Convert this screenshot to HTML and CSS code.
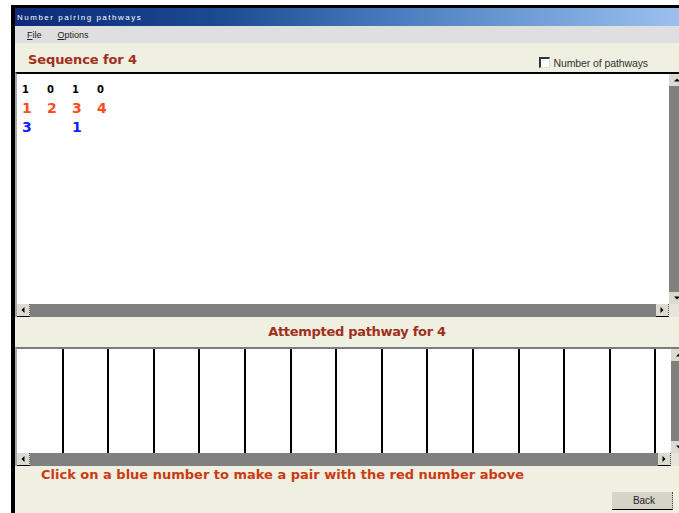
FILE: index.html
```html
<!DOCTYPE html>
<html>
<head>
<meta charset="utf-8">
<title>Pathways</title>
<link rel="stylesheet" href="styles.css">
</head>
<body>
<div class="window">
  <div class="titlebar"><span class="title">Number pairing pathways</span></div>
  <div class="menubar">
    <span class="menu"><u>F</u>ile</span>
    <span class="menu"><u>O</u>ptions</span>
  </div>
  <div class="client">
    <div class="head-row">
      <h1 class="caption">Sequence for 4</h1>
      <label class="check"><span class="check-box"></span>Number of pathways</label>
    </div>

    <div class="panel panel-seq">
      <div class="panel-body">
        <div class="view seq-view">
          <div class="num-row row-bits"><span>1</span><span>0</span><span>1</span><span>0</span></div>
          <div class="num-row row-red"><span>1</span><span>2</span><span>3</span><span>4</span></div>
          <div class="num-row row-blue"><span>3</span><span></span><span>1</span><span></span></div>
        </div>
        <div class="vscroll">
          <span class="sbtn up"></span>
          <span class="track"></span>
          <span class="sbtn down"></span>
        </div>
      </div>
      <div class="hscroll">
        <span class="sbtn left"></span>
        <span class="track"></span>
        <span class="sbtn right"></span>
        <span class="corner"></span>
      </div>
    </div>

    <h2 class="caption centered">Attempted pathway for 4</h2>

    <div class="panel panel-path">
      <div class="panel-body">
        <div class="view path-view">
          <div class="cell"></div><div class="cell"></div><div class="cell"></div><div class="cell"></div>
          <div class="cell"></div><div class="cell"></div><div class="cell"></div><div class="cell"></div>
          <div class="cell"></div><div class="cell"></div><div class="cell"></div><div class="cell"></div>
          <div class="cell"></div><div class="cell"></div>
        </div>
        <div class="vscroll">
          <span class="sbtn up"></span>
          <span class="track"></span>
          <span class="sbtn down"></span>
        </div>
      </div>
      <div class="hscroll">
        <span class="sbtn left"></span>
        <span class="track"></span>
        <span class="sbtn right"></span>
        <span class="corner"></span>
      </div>
    </div>

    <p class="hint">Click on a blue number to make a pair with the red number above</p>

    <div class="actions">
      <button class="btn" type="button">Back</button>
    </div>
  </div>
</div>
</body>
</html>
```

FILE: styles.css
```css
html, body {
  margin: 0;
  padding: 0;
  background: #ffffff;
  width: 679px;
  height: 513px;
  overflow: hidden;
}

.window {
  margin: 5px 0 0 11px;
  width: 690px;
  height: 508px;
  border-top: 3px solid #000;
  border-left: 4px solid #000;
  display: flex;
  flex-direction: column;
  font-family: "DejaVu Sans", Verdana, sans-serif;
}

/* caption bar */
.titlebar {
  height: 18px;
  background: linear-gradient(to right, #0c2a78 0%, #1c4b92 30%, #4a7cbc 55%, #7aa6dc 80%, #a2c6f2 100%);
  display: flex;
  align-items: center;
  padding-left: 2px;
}
.title {
  color: #fff;
  font-family: "Liberation Sans", Arial, sans-serif;
  font-size: 8px;
  letter-spacing: 1.5px;
}

/* menu */
.menubar {
  height: 17px;
  background: #dfdfdf;
  display: flex;
  align-items: center;
  gap: 16px;
  padding-left: 12px;
  font-family: "Liberation Sans", Arial, sans-serif;
  font-size: 9px;
  color: #222;
}

.client {
  flex: 1;
  background: #efefe2;
  display: flex;
  flex-direction: column;
}

.head-row {
  height: 29px;
  display: flex;
  align-items: center;
  justify-content: space-between;
  width: 633px;
  padding-left: 13px;
  box-sizing: border-box;
}

.caption {
  margin: 0;
  font-size: 13px;
  font-weight: bold;
  color: #a0301a;
  letter-spacing: -0.1px;
}
.head-row .caption { margin-top: 4px; }

.centered {
  width: 684px;
  text-align: center;
  height: 30px;
  line-height: 30px;
  letter-spacing: -0.3px;
}

.check {
  display: flex;
  align-items: center;
  gap: 4px;
  font-family: "Liberation Sans", Arial, sans-serif;
  font-size: 10.5px;
  color: #333;
  margin-top: 10px;
  letter-spacing: -0.1px;
}
.check-box {
  width: 8px;
  height: 8px;
  background: #fff;
  border-top: 2px solid #333;
  border-left: 2px solid #333;
  border-right: 1px solid #ddd;
  border-bottom: 1px solid #ddd;
}

/* list panels with scrollbars */
.panel {
  display: flex;
  flex-direction: column;
  border-left: 2px solid #a8a8a8;
}
.panel-seq {
  width: 668px;
  border-top: 2px solid #000;
}
.panel-path {
  width: 670px;
  border-top: 2px solid #7c7c7c;
}
.panel-body {
  display: flex;
}
.view {
  flex: 1;
  background: #fff;
}
.seq-view {
  height: 230px;
  padding: 6px 0 0 5px;
  box-sizing: border-box;
}
.path-view {
  height: 104px;
  display: grid;
  grid-template-columns: repeat(14, 45.6px);
  padding-left: 1px;
}
.cell {
  border-right: 2px solid #000;
}

.num-row {
  display: grid;
  grid-template-columns: repeat(4, 25px);
  font-weight: bold;
  line-height: 19px;
  height: 19px;
}
.row-bits {
  font-size: 10px;
  color: #000;
}
.row-red {
  font-size: 14px;
  color: #ff4a1c;
}
.row-blue {
  font-size: 14px;
  color: #1020ff;
}

.vscroll {
  width: 16px;
  display: flex;
  flex-direction: column;
  background: #808080;
}
.vscroll .track { flex: 1; }
.hscroll {
  height: 13px;
  display: flex;
  background: #808080;
}
.hscroll .track { flex: 1; }
.corner {
  width: 16px;
  background: #e6e5da;
}

.sbtn {
  position: relative;
  background: #dcdbd2;
  box-sizing: border-box;
}
.vscroll .sbtn {
  height: 12px;
  border-right: 1px solid #333;
}
.hscroll .sbtn {
  width: 13px;
  border-bottom: 1px solid #000;
  border-right: 1px dotted #555;
}
.sbtn::after {
  content: "";
  position: absolute;
  left: 50%;
  top: 50%;
  width: 0;
  height: 0;
  border: 3px solid transparent;
}
.up::after {
  border-bottom-color: #000;
  transform: translate(-50%, -75%);
}
.down::after {
  border-top-color: #000;
  transform: translate(-50%, -25%);
}
.left::after {
  border-right-color: #000;
  transform: translate(-75%, -50%);
}
.right::after {
  border-left-color: #000;
  transform: translate(-25%, -50%);
}

.hint {
  margin: 1px 0 0 26px;
  font-size: 13px;
  font-weight: bold;
  color: #cc3a12;
}

.actions {
  width: 658px;
  display: flex;
  justify-content: flex-end;
  margin-top: 10px;
}
.btn {
  width: 61px;
  height: 18px;
  padding: 0;
  background: #d6d3c8;
  border: none;
  border-bottom: 1px solid #000;
  border-right: 1px dotted #444;
  font-family: "Liberation Sans", Arial, sans-serif;
  font-size: 10px;
  color: #222;
  padding-left: 4px;
}
```
